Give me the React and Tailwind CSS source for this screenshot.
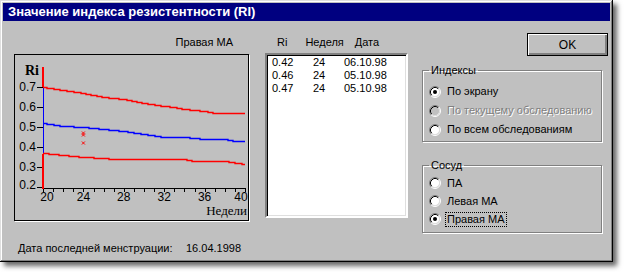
import React from 'react'

const ROWS = [
  { ri: '0.42', week: '24', date: '06.10.98' },
  { ri: '0.46', week: '24', date: '05.10.98' },
  { ri: '0.47', week: '24', date: '05.10.98' },
]

const UPPER = [[20, 0.7], [22, 0.685], [24, 0.67], [26, 0.65], [28, 0.64], [30, 0.62], [32, 0.605], [33, 0.6], [34, 0.59], [36, 0.58], [37, 0.57], [40, 0.57]]
const MIDDLE = [[20, 0.52], [22, 0.505], [24, 0.5], [26, 0.49], [28, 0.48], [30, 0.465], [32, 0.45], [34, 0.45], [36, 0.44], [38, 0.44], [39, 0.43], [40, 0.43]]
const LOWER = [[20, 0.37], [22, 0.36], [24, 0.35], [26, 0.345], [27, 0.34], [34, 0.34], [35, 0.33], [38, 0.33], [40, 0.315]]

const wx = w => 28 + (w - 20) * 10.1
const vy = v => 32 + (0.7 - v) * 200

// staircase polyline, like the old GDI plot
function stepPath(pts) {
  const x0 = Math.round(wx(20))
  const x1 = Math.round(wx(40))
  let d = ''
  let prev = null
  for (let x = x0; x <= x1; x++) {
    const w = 20 + (x - 28) / 10.1
    let i = 1
    while (i < pts.length - 1 && pts[i][0] < w) i++
    const [wa, va] = pts[i - 1]
    const [wb, vb] = pts[i]
    const t = Math.min(1, Math.max(0, (w - wa) / (wb - wa)))
    const y = Math.round(vy(va + (vb - va) * t)) + 0.5
    if (prev === null) d = `M${x} ${y}`
    else if (y !== prev) d += ` H${x} V${y}`
    prev = y
  }
  return d + ` H${x1}`
}

function Chart() {
  const weeks = Array.from({ length: 21 }, (_, i) => 20 + i)
  const vals = [0.7, 0.6, 0.5, 0.4, 0.3, 0.2]
  const xLabels = [[20, 32], [24, wx(24)], [28, wx(28)], [32, wx(32)], [36, wx(36)], [40, 226]]
  return (
    <svg width="233" height="165" viewBox="0 0 233 165">
      <text x="10" y="20" fontFamily="Liberation Serif, serif" fontWeight="bold" fontSize="14">Ri</text>
      {vals.map(v => (
        <g key={v}>
          <line x1="22" x2="28" y1={Math.round(vy(v)) + 0.5} y2={Math.round(vy(v)) + 0.5} stroke="#000" />
          <text x="21" y={vy(v) + (v === 0.2 ? 2 : 4)} textAnchor="end" fontFamily="Liberation Sans, Arial, sans-serif" fontSize="12">{v.toFixed(1)}</text>
        </g>
      ))}
      <line x1="28" x2="231" y1="133.5" y2="133.5" stroke="#000" />
      {weeks.map(w => (
        <line key={w} x1={Math.round(wx(w)) + 0.5} x2={Math.round(wx(w)) + 0.5} y1="133" y2="137" stroke="#000" />
      ))}
      {xLabels.map(([w, x]) => (
        <text key={w} x={x} y="146" textAnchor="middle" fontFamily="Liberation Sans, Arial, sans-serif" fontSize="12">{w}</text>
      ))}
      <text x="232" y="160" textAnchor="end" fontFamily="Liberation Serif, serif" fontSize="13">Недели</text>

      <line x1="28.5" x2="28.5" y1="32" y2="100" stroke="#0000ff" />
      <rect x="27" y="12" width="2" height="20" fill="#ff0000" />
      <rect x="27" y="99" width="2" height="35" fill="#ff0000" />

      <path d={stepPath(UPPER)} fill="none" stroke="#ff0000" strokeWidth="1.4" />
      <path d={stepPath(MIDDLE)} fill="none" stroke="#0000ff" strokeWidth="1.4" />
      <path d={stepPath(LOWER)} fill="none" stroke="#ff0000" strokeWidth="1.4" />

      {[0.47, 0.46, 0.42].map(v => (
        <g key={v} stroke="#ff0000" strokeWidth="1">
          <line x1={wx(24) - 1.5} x2={wx(24) + 1.5} y1={vy(v) - 1.5} y2={vy(v) + 1.5} />
          <line x1={wx(24) - 1.5} x2={wx(24) + 1.5} y1={vy(v) + 1.5} y2={vy(v) - 1.5} />
        </g>
      ))}
    </svg>
  )
}

function Radio({ checked, disabled }) {
  return (
    <svg width="12" height="12" viewBox="0 0 12 12" className="shrink-0">
      <circle cx="6" cy="6" r="4.5" fill={disabled ? '#c0c0c0' : '#fff'} />
      <path d="M2.11 9.89 A5.5 5.5 0 0 1 9.89 2.11" fill="none" stroke="#808080" />
      <path d="M9.89 2.11 A5.5 5.5 0 0 1 2.11 9.89" fill="none" stroke="#fff" />
      <path d="M2.82 9.18 A4.5 4.5 0 0 1 9.18 2.82" fill="none" stroke="#000" />
      <path d="M9.18 2.82 A4.5 4.5 0 0 1 2.82 9.18" fill="none" stroke="#dfdfdf" />
      {checked && <circle cx="6" cy="6" r="2" fill="#000" />}
    </svg>
  )
}

function Option({ label, checked, disabled, focused, h }) {
  return (
    <div className={`flex items-center gap-[6px] pl-[6px] whitespace-nowrap ${h}`}>
      <Radio checked={checked} disabled={disabled} />
      <span
        className={`leading-[13px] ${disabled ? 'text-[#808080] [text-shadow:1px_1px_0_#fff]' : 'text-black'} ${
          focused ? 'border border-dotted border-black px-px -ml-[2px]' : ''
        }`}
      >
        {label}
      </span>
    </div>
  )
}

function Group({ title, children, className }) {
  return (
    <fieldset className={`w-[180px] border border-[#808080] shadow-[inset_1px_1px_0_#fff,1px_1px_0_#fff] ${className}`}>
      <legend className="ml-[6px] px-[2px] leading-[14px]">{title}</legend>
      {children}
    </fieldset>
  )
}

export default function App() {
  return (
    <div className="w-[624px] h-[272px] bg-white font-['Liberation_Sans',Arial,sans-serif] text-[11px] text-black">
      <div className="w-[613px] h-[262px] bg-[#c0c0c0] p-[3px] flex flex-col shadow-[inset_-1px_-1px_0_#000,inset_1px_1px_0_#dfdfdf,inset_-2px_-2px_0_#808080,inset_2px_2px_0_#fff,4px_4px_5px_rgba(0,0,0,0.6)]">
        <div className="h-[18px] bg-[#000080] text-white font-bold text-[13px] leading-[18px] pl-[5px] whitespace-nowrap">
          Значение индекса резистентности (RI)
        </div>

        <div className="flex flex-1">
          <div className="flex flex-col ml-[11px]">
            <div className="flex">
              <div className="flex flex-col w-[235px] pt-[14px]">
                <div className="h-[14px] leading-[14px] text-right pr-[16px]">Правая МА</div>
                <div className="mt-[5px] w-[235px] h-[167px] border border-black shadow-[1px_1px_0_#fff]">
                  <Chart />
                </div>
              </div>

              <div className="flex flex-col ml-[16px] pt-[14px]">
                <div className="h-[14px] leading-[14px] flex whitespace-nowrap">
                  <span className="ml-[12px]">Ri</span>
                  <span className="ml-[18px]">Неделя</span>
                  <span className="ml-[11px]">Дата</span>
                </div>
                <div className="mt-[4px] w-[143px] h-[165px] bg-white border-2 border-t-[#808080] border-l-[#808080] border-b-white border-r-white shadow-[inset_1px_1px_0_#000,inset_-1px_-1px_0_#dfdfdf] pt-[1px]">
                  {ROWS.map((r, i) => (
                    <div key={i} className="flex leading-[13px] pl-[5px]">
                      <span className="w-[41px]">{r.ri}</span>
                      <span className="w-[31px]">{r.week}</span>
                      <span>{r.date}</span>
                    </div>
                  ))}
                </div>
              </div>
            </div>
            <div className="mt-[21px] ml-[4px] leading-[12px] flex whitespace-nowrap">
              <span className="w-[168px]">Дата последней менструации:</span>
              <span>16.04.1998</span>
            </div>
          </div>

          <div className="flex flex-col ml-[14px] w-[186px]">
            <button className="mt-[12px] ml-[105px] w-[81px] h-[23px] border border-black bg-[#c0c0c0] shadow-[inset_1px_1px_0_#fff,inset_-1px_-1px_0_#808080,inset_-2px_-2px_0_#808080] leading-[20px] text-center text-[12px]">
              OK
            </button>
            <Group title="Индексы" className="mt-[7px] pt-[5px] pb-[2px]">
              <Option h="h-[19px]" label="По экрану" checked />
              <Option h="h-[19px]" label="По текущему обследованию" disabled />
              <Option h="h-[19px]" label="По всем обследованиям" />
            </Group>
            <Group title="Сосуд" className="mt-[16px] pt-[2px] pb-[4px]">
              <Option h="h-[18px]" label="ПА" />
              <Option h="h-[18px]" label="Левая МА" />
              <Option h="h-[18px]" label="Правая МА" checked focused />
            </Group>
          </div>
        </div>
      </div>
    </div>
  )
}
